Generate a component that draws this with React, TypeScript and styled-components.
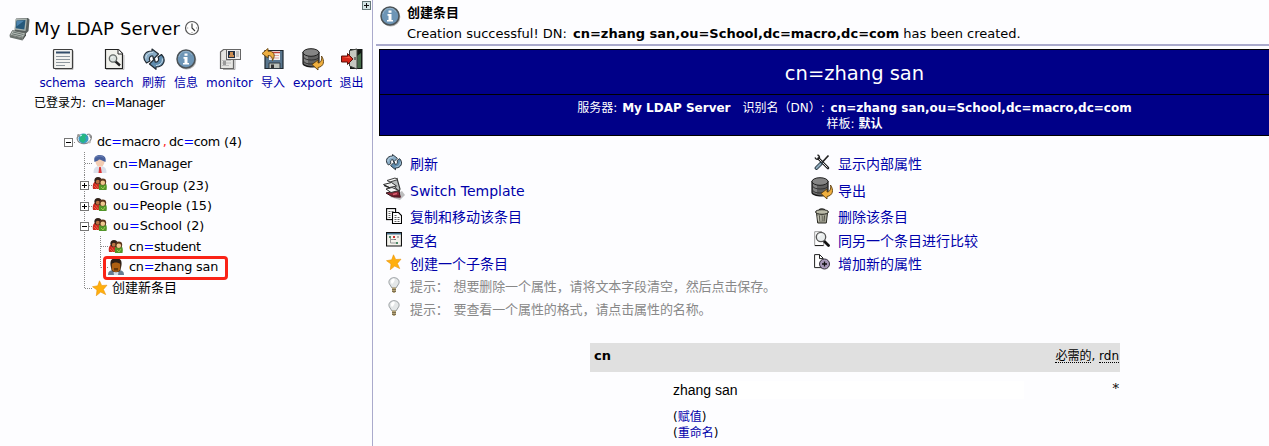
import React from 'react';
import styled, { createGlobalStyle } from 'styled-components';

const sans = `'DejaVu Sans', 'Noto Sans CJK SC', sans-serif`;

const GlobalStyle = createGlobalStyle`
  body { margin: 0; background: #fdfdff; overflow: hidden; }
  * { box-sizing: border-box; }
  svg { display: block; flex: none; }
`;

const Page = styled.div`
  display: flex;
  width: 1269px;
  height: 446px;
  overflow: hidden;
  background: #fdfdff;
  color: #000;
  font-family: ${sans};
  font-size: 13px;
  white-space: nowrap;
`;

const Sidebar = styled.aside`
  position: relative;
  flex: none;
  width: 373px;
  border-right: 1px solid #aaaacc;
`;

const ResizeButton = styled.div`
  position: absolute;
  top: 1px;
  right: 0;
`;

const ServerTitle = styled.h1`
  display: flex;
  align-items: center;
  height: 26px;
  margin: 16px 0 0 8px;
  font-size: 18px;
  font-weight: normal;
  letter-spacing: 0.2px;
  line-height: 26px;
`;

const ServerName = styled.span`
  margin: -1px 4px 0 2px;
`;

const ClockSlot = styled.span`
  margin-top: -2px;
`;

const Toolbar = styled.nav`
  display: flex;
  margin: 5px 0 0 35px;
`;

const Tool = styled.a<{ $w: number; $ls?: number }>`
  display: flex;
  flex-direction: column;
  align-items: center;
  width: ${(p) => p.$w}px;
  color: #0000aa;
  font-size: 12px;
  line-height: 18px;
  letter-spacing: ${(p) => p.$ls ?? 0}px;

  svg { margin-bottom: 3px; }
`;

const LoggedIn = styled.div`
  margin: 1px 0 0 34px;
  height: 20px;
  font-size: 12px;
  line-height: 20px;
`;

const UserName = styled.span`
  margin-left: 2px;
  letter-spacing: -0.4px;
`;

const Eq = styled.span<{ $red?: boolean }>`
  color: ${(p) => (p.$red ? '#ff2020' : '#0000ff')};
  ${(p) => (p.$red ? 'padding: 0 2.5px 0 3px;' : '')}
`;

const Tree = styled.div`
  margin: 19px 0 0 61px;
`;

const TreeRow = styled.div<{ $h: number }>`
  position: relative;
  display: flex;
  align-items: center;
  height: ${(p) => p.$h}px;
`;

const NodeIcon = styled.span<{ $gap?: number; $up?: number }>`
  margin-right: ${(p) => p.$gap ?? 5}px;
  margin-top: ${(p) => -(p.$up ?? 0)}px;
`;

const NodeText = styled.span<{ $ls?: number; $size?: number }>`
  font-size: ${(p) => p.$size ?? 12.8}px;
  line-height: 20px;
  letter-spacing: ${(p) => p.$ls ?? 0}px;
`;

const Highlight = styled.div`
  position: absolute;
  left: 42px;
  top: -1px;
  width: 125px;
  height: 24px;
  border: 3px solid #fa2317;
  border-radius: 4px;
`;

const Main = styled.main`
  flex: 1;
  min-width: 0;
  padding-left: 3px;
  overflow: hidden;
`;

const Notice = styled.section`
  display: flex;
  height: 46px;
  border-bottom: 2px solid #aaaacc;
  padding: 4px 0 0 2px;
  font-size: 13px;
  line-height: 20px;
`;

const NoticeText = styled.div`
  margin: -1px 0 0 5px;
`;

const NoticeTitle = styled.div`
  height: 21px;
  font-weight: bold;
`;

const CreatedDn = styled.b`
  margin-left: 2px;
`;

const EntryHeader = styled.header`
  width: 951px;
  margin: 3px 0 0 3px;
  border: 1px solid #000;
  background: #000088;
  color: #fff;
  text-align: center;
`;

const EntryName = styled.h2`
  height: 45px;
  margin: 0;
  border-bottom: 1px solid #000;
  font-size: 19.5px;
  font-weight: normal;
  line-height: 47px;
`;

const EntryMeta = styled.div`
  height: 40px;
  padding-top: 5px;
  font-size: 12px;
  line-height: 16px;
`;

const MetaValue = styled.b<{ $gap?: number }>`
  margin-left: ${(p) => p.$gap ?? 0}px;
`;

const Spacer = styled.span`
  display: inline-block;
  width: 12px;
`;

const Actions = styled.div`
  display: flex;
  margin: 14px 0 0 5px;
`;

const ActionColumn = styled.div<{ $w: number }>`
  width: ${(p) => p.$w}px;
`;

const Action = styled.div<{ $h: number; $hint?: boolean; $ls?: number }>`
  display: flex;
  align-items: center;
  height: ${(p) => p.$h}px;
  color: ${(p) => (p.$hint ? '#888888' : '#0000aa')};
  font-size: ${(p) => (p.$hint ? 13 : 14)}px;
  line-height: 20px;
  letter-spacing: ${(p) => p.$ls ?? 0}px;
`;

const ActionIcon = styled.span<{ $up?: number }>`
  display: flex;
  justify-content: center;
  width: 24px;
  margin-left: 1px;
  margin-right: 4px;
  margin-top: ${(p) => -(p.$up ?? 0)}px;
`;

const HintLabel = styled.span`
  width: 43.5px;
`;

const Attribute = styled.section`
  width: 530px;
  margin: 22px 0 0 214px;
`;

const AttributeHead = styled.div`
  display: flex;
  justify-content: space-between;
  height: 29px;
  padding: 3px 1px 0 4px;
  background: #e0e0e0;
  line-height: 20px;
`;

const Flags = styled.span`
  font-size: 12px;
`;

const Abbr = styled.span`
  display: inline-block;
  height: 16px;
  line-height: 18px;
  border-bottom: 1px dotted #000;
`;

const ValueRow = styled.div`
  display: flex;
  justify-content: space-between;
  padding: 9px 1px 0 83px;
`;

const ValueInput = styled.div`
  width: 351px;
  height: 18px;
  background: #fff;
  font-family: 'Liberation Sans', sans-serif;
  font-size: 14px;
  line-height: 19px;
`;

const Star = styled.span`
  font-family: 'DejaVu Serif', serif;
  font-size: 13px;
  line-height: 15px;
`;

const ValueLinks = styled.div`
  margin: 10px 0 0 83px;
  font-size: 12px;
  line-height: 16px;

  a { color: #0000aa; }
`;

const Svg = ({ s, v = s, children }: { s: number; v?: number; children: React.ReactNode }) => (
  <svg width={s} height={s} viewBox={`0 0 ${v} ${v}`} fill="none">
    {children}
  </svg>
);

const Computer = () => (
  <Svg s={24}>
    <path d="M8 1.500l12-.5 1.500 1.500-1 11.500-3 3-11-2.500z" fill="#59605f" />
    <path d="M7.500 2l11.500-.5-1.500 12.500-11-1.500z" fill="#a9b3af" />
    <path d="M8.500 3.500l9-.5-1.200 9.500-8.600-1.200z" fill="#26587a" />
    <path d="M9 4l7-.3-7.500 5.800z" fill="#4c83ad" />
    <path d="M4.500 13.500l13 2.500-2.500 5-13-3z" fill="#b9c0bb" stroke="#59605b" strokeWidth=".8" />
    <path d="M1.500 18l13.500 3.200-.5 2.300-12.500-3z" fill="#6b726e" />
    <path d="M15 21l3-5v2.500l-3.500 5z" fill="#444a47" />
    <path d="M5 15l10.500 2.500M4 16.800l10.500 2.500" stroke="#66706c" strokeWidth="1" />
  </Svg>
);

const Clock = () => (
  <Svg s={16}>
    <circle cx="8" cy="8" r="6.500" fill="#fff" stroke="#555" strokeWidth="1.200" />
    <path d="M8 3.500V8l3 3" stroke="#333" strokeWidth="1.100" />
    <path d="M3.200 8h1M12 8h1M8 12v1" stroke="#888" />
  </Svg>
);

const Schema = () => (
  <Svg s={24}>
    <path d="M4 22.500h18V4" stroke="#bbb" />
    <rect x="2.500" y="2.500" width="19" height="19" rx="1" fill="#f3f3f1" stroke="#3e3e3e" strokeWidth="1.200" />
    <path d="M5 5.500h14" stroke="#334d6a" strokeWidth="2" />
    <path d="M5 9.500h14M5 12.500h14M5 15.500h14M5 18.500h9" stroke="#8d969d" strokeWidth="1.200" />
  </Svg>
);

const Search = () => (
  <Svg s={24}>
    <path d="M4 22.500h18V8" stroke="#bbb" />
    <path d="M3.500 2.500h13l4 4v15h-17z" fill="#f1f1ec" stroke="#222" strokeWidth="1.200" />
    <path d="M16 2.500V7h4.500" fill="#fff" stroke="#222" />
    <path d="M13 14l5 4.500" stroke="#222" strokeWidth="2.400" />
    <circle cx="11" cy="11.500" r="3.700" fill="#dbe2df" stroke="#666b68" strokeWidth="1.300" />
    <path d="M9.500 11l1.500-1.500" stroke="#fff" />
  </Svg>
);

const Refresh = ({ s = 24 }: { s?: number }) => (
  <Svg s={s} v={24}>
    <path d="M4.500 16C-.5 11 2 4 10 4V2l6.500 5-5 5-.7-3C8 8.500 6.500 11 8 14z" fill="#88abc5" stroke="#222b33" strokeWidth="1.200" strokeLinejoin="round" />
    <path d="M19.500 7.500c5 5 2.500 12.500-5.500 12.500v2.300L7.500 17l5-5 .7 3c2.800.5 4.300-2 2.800-5z" fill="#5f8cae" stroke="#222b33" strokeWidth="1.200" strokeLinejoin="round" />
    <path d="M3.800 11.500c0-4 2.700-6 7.200-6.200M20.300 11.500c.6 4-2 6.800-6.300 7" stroke="#cfe0eb" />
  </Svg>
);

const Info = () => (
  <Svg s={24}>
    <circle cx="12.700" cy="12.900" r="9.600" fill="#b4b4b4" />
    <circle cx="12" cy="12" r="9" fill="#6d95b6" stroke="#4c5357" strokeWidth="1.500" />
    <path d="M5 10a7 7 0 0 1 13-2" stroke="#94b1c8" />
    <path d="M10.500 6.500h3v2.200h-3zM9.500 10h4v6H15v1.500H9V16h1.500v-4.300h-1z" fill="#fff" />
  </Svg>
);

const Monitor = () => (
  <Svg s={24}>
    <path d="M5 22.500h12V13" stroke="#aaa" />
    <path d="M2.500 5l3-2.500h10v19h-13z" fill="#e5e5e2" stroke="#666" strokeWidth="1.200" />
    <path d="M4 13.500h9M4 16h9M4 18.500h7" stroke="#bcbcbc" />
    <path d="M5 14h3v4H5z" fill="#999" />
    <rect x="8.500" y="2.500" width="14" height="10" fill="#eee" stroke="#666" />
    <rect x="10" y="4" width="7" height="7" fill="#243040" />
    <path d="M12 5h3v3h1v2h-5V8h1z" fill="#c98c52" />
    <path d="M18 5h3M18 7h3M18 9h3" stroke="#999" />
  </Svg>
);

const Import = () => (
  <Svg s={24}>
    <path d="M4 3.500h18v18H4z" fill="#58758d" stroke="#1e2830" strokeWidth="1.200" />
    <path d="M8 4h11v9H8z" fill="#f3f3f3" />
    <path d="M10 5.500h9" stroke="#bf3e38" strokeWidth="1.500" />
    <path d="M11 8.500h7M9 11h9" stroke="#e3a29c" />
    <path d="M8 16h11v5.500H8z" fill="#bdc2bb" stroke="#303a40" />
    <path d="M10 17.500h3V21h-3z" fill="#333" />
    <path d="M1 6.500L7 1.500v2.700c6-.2 8 3.800 4.500 9.300 0-3.500-1.500-5-4.500-5V11z" fill="#edae42" stroke="#67430b" strokeWidth=".9" />
  </Svg>
);

const Export = () => (
  <Svg s={24}>
    <path d="M2 5.500v11c0 3 15 6 16 0v-11z" fill="#606060" stroke="#171717" strokeWidth="1.200" />
    <path d="M3 7v9c1 1 2 1.500 4 2V9z" fill="#858585" />
    <ellipse cx="10" cy="5.500" rx="8" ry="3.800" fill="#858585" stroke="#202020" />
    <path d="M2.500 10c1 4 14.500 4 15.500 0M2.500 14c1 4 13.500 4 14.500 0" stroke="#303030" />
    <path d="M20.500 9c3.500 5 2.500 10.500-3.500 11.500V23l-6-5.500 6-4.500v3c3 0 4-3 3.500-7z" fill="#f0af3e" stroke="#5e3e0d" strokeWidth=".9" />
  </Svg>
);

const Exit = () => (
  <Svg s={24}>
    <path d="M10 2h12.500v20H10z" fill="#141a16" />
    <path d="M17 9l4-3v15h-4z" fill="#456b49" />
    <path d="M9.500 3.500L17 2v20l-7.500-3z" fill="#c6c8c1" stroke="#3e403d" />
    <path d="M15 10v3" stroke="#222" />
    <path d="M1.500 9h6V6.500L13 12l-5.500 5.500V15h-6z" fill="#d62518" stroke="#5b120b" />
    <path d="M2.500 10h6V9l2.500 2.500z" fill="#f5644d" />
  </Svg>
);

const Globe = () => (
  <Svg s={16}>
    <path d="M13 4c3-1 3 2 1 5-3 4-10 3-12 0C0 6 2 3 5 3" stroke="#888" strokeWidth="1.200" />
    <circle cx="7.500" cy="6.500" r="5" fill="#3a9bc3" />
    <path d="M5 3c2-2 5-1 6 1l-2 1 1 3-3 3-3-2V6z" fill="#25b781" />
    <path d="M4 4l2-1" stroke="#d8ffff" />
    <path d="M11 2.500c3-1 5 .5 3.500 3.500" stroke="#777" strokeWidth="1" />
    <circle cx="2.500" cy="3.500" r="1.400" fill="#999" />
    <circle cx="13.500" cy="10" r="1.400" fill="#bbb" />
  </Svg>
);

const Manager = () => (
  <svg width="16" height="20" viewBox="0 0 16 20">
    <path d="M1.500 19c0-5 2-7 6.500-7s6.500 2 6.500 7z" fill="#d9dfea" />
    <path d="M5.500 11h5l-2.500 5z" fill="#fff" />
    <path d="M7.200 13h1.600l1 6H6.500z" fill="#d33" />
    <ellipse cx="8" cy="7.500" rx="4.500" ry="5.200" fill="#f3cdb4" />
    <path d="M2.500 8c-1-5 1-7 5.500-7s6.500 3 5.500 7C11 7 9 5.500 7 5.500 6 7 4 7 2.500 8z" fill="#475f9b" />
    <path d="M3.500 3.500c2-2 6-2 8 0" stroke="#7387b9" fill="none" />
  </svg>
);

const People = () => (
  <Svg s={16}>
    <path d="M1 13c-1-5 1-8 4-8s5 3 4 8z" fill="#c92a20" />
    <path d="M7 14c-1-6 1-8 4-8s4.500 3 3.500 8z" fill="#529529" />
    <circle cx="6" cy="4.500" r="3.600" fill="#302019" />
    <circle cx="5.800" cy="5.700" r="2" fill="#ba7243" />
    <circle cx="10.800" cy="5.800" r="3.400" fill="#5b351c" />
    <circle cx="10.800" cy="6.800" r="2.300" fill="#efc78e" />
    <path d="M2 10l3 3M3.500 8.500l3 4" stroke="#f25c43" />
    <path d="M9 11l2 2 2-3" stroke="#9bca4f" />
  </Svg>
);

const Person = () => (
  <svg width="16" height="20" viewBox="0 0 16 20">
    <path d="M0 18c0-4 2-5 8-5s8 1 8 5z" fill="#667c91" />
    <path d="M5 12h6l-1 6H6z" fill="#d5dde3" />
    <path d="M2.500 8C2 3 4 1 8 1s6 2 5.500 7l-1 5c-1 3-8 3-9 0z" fill="#2d2018" />
    <path d="M3.800 7c2-2 6-2 8.400 0v5c-.5 4-7.900 4-8.400 0z" fill="#ae6012" />
    <path d="M6 11h4v2.500H6z" fill="#693909" />
  </svg>
);

const StarIcon = () => (
  <Svg s={16}>
    <path d="M7.500.8l2.200 4.700 5.300-.3-3.600 4.200 2.300 5.200-5-2.500-4.400 3.600.7-5.700L.5 6.700l5.200-.9z" fill="#ffaf0d" stroke="#e9930a" strokeWidth=".6" />
  </Svg>
);

const Scanner = () => (
  <Svg s={24}>
    <path d="M8 20l12-6 3 4-5 5z" fill="#888" opacity=".55" />
    <path d="M4 16l13-3 1 7-9-1z" fill="#8a2636" stroke="#33151b" />
    <path d="M9 19l9-1 1 2.500H12z" fill="#5b1a26" />
    <path d="M7 4l8-2.500L18 12l-1 3-5-6z" fill="#b9bdbc" stroke="#343636" strokeWidth="1.100" />
    <path d="M5 3.500L13 1l3 1.500-8 2.500z" fill="#f3f3f2" stroke="#444" />
    <path d="M1.500 7.500l8-2 5 3.500-7 1.500z" fill="#eeefee" stroke="#333" />
    <path d="M4 12l6-1.500 7 3-8 2z" fill="#f7f7f7" stroke="#333" />
    <path d="M2 8.500l6 2.500" stroke="#222" strokeWidth="1.300" />
    <path d="M11 17.500l4-1" stroke="#dd6374" strokeWidth="1.300" />
  </Svg>
);

const Copy = () => (
  <Svg s={16}>
    <rect x=".6" y=".6" width="9" height="11" fill="#fff" stroke="#000" strokeWidth="1.100" />
    <path d="M2.500 3.500h5M2.500 5.500h3M2.500 7.500h3M2.500 9.500h3" stroke="#666" strokeDasharray="2 1" />
    <path d="M6.500 4.500h6l3 3v8h-9z" fill="#fff" stroke="#000" strokeWidth="1.100" />
    <path d="M8.500 7.500h3M8.500 9.500h5M8.500 11.500h5M8.500 13.500h5" stroke="#666" strokeDasharray="2 1" />
  </Svg>
);

const Rename = () => (
  <Svg s={16}>
    <path d="M.5 1.500h15v13.500H.5z" fill="#f4f3ed" stroke="#111" strokeWidth="1.200" />
    <path d="M1 2h14v1.500H1z" fill="#426e8b" />
    <path d="M4.500 6v6h6M4.500 8.500h4" stroke="#999" />
    <path d="M3 5h2v2H3zM10 11h2v2h-2z" fill="#4f8b68" />
    <path d="M7 5h2v2H7z" fill="#cb3030" />
    <path d="M11 5.500h2v1h-2zM8 8h2v1H8z" fill="#777" />
  </Svg>
);

const Bulb = () => (
  <Svg s={16}>
    <path d="M8 .7c4.500 0 6.500 4.200 4 7.200L10 11H6L4 7.900C1.500 4.900 3.500.7 8 .7z" fill="#e4e7e8" stroke="#8d9396" strokeWidth=".9" />
    <path d="M5 4c.7-2 2-2.500 3-2.500s1 2-.5 4S5 7 5 4z" fill="#fff" />
    <path d="M6 10.500h4v4L8.500 16h-1L6 14.500z" fill="#b4a276" />
    <path d="M6 12.500h4M6 14.500h4" stroke="#6d6246" strokeWidth=".8" />
  </Svg>
);

const Tools = () => (
  <Svg s={16}>
    <path d="M4.500 4.500l9.500 9.500" stroke="#222" strokeWidth="2.600" strokeLinecap="round" />
    <path d="M5 5l8.500 8.500" stroke="#e5e5e5" strokeWidth="1" />
    <path d="M1 3.500c1 2.500 3 2 4 1.200S5.500 1.500 3.500 1" stroke="#222" strokeWidth="1.400" />
    <path d="M14.500 1.500L8 8.500" stroke="#222" strokeWidth="1.700" />
    <path d="M7 9.500l-4.500 4.500" stroke="#26343e" strokeWidth="3.800" strokeLinecap="round" />
    <path d="M6.500 10l-4 4" stroke="#8daabd" strokeWidth="1.900" strokeLinecap="round" />
  </Svg>
);

const Trash = () => (
  <Svg s={16}>
    <path d="M2.500 5h11l-1.200 10H3.700z" fill="#a7a797" stroke="#292922" />
    <ellipse cx="8" cy="4" rx="6.500" ry="2.300" fill="#bbbba9" stroke="#20201c" />
    <path d="M5.500 2c0-1.600 5-1.600 5 0" stroke="#20201c" strokeWidth="1.100" />
    <path d="M5.500 7.500l.5 6M8 7.500v6M10.500 7.500l-.5 6" stroke="#4b4b41" />
    <path d="M4 8l.5 5M7 8v5" stroke="#deded0" strokeWidth=".7" />
  </Svg>
);

const Compare = () => (
  <Svg s={16}>
    <path d="M.7.7h7l2 2v12h-9z" fill="#fff" stroke="#999" />
    <path d="M1 14.500h8.500" stroke="#222" />
    <path d="M10 10l4.500 4.500" stroke="#111" strokeWidth="2.800" strokeLinecap="round" />
    <circle cx="7" cy="6" r="4.700" fill="#e9eded" stroke="#555" strokeWidth="1.300" />
    <path d="M4.500 5.500c.5-1.500 1.500-2 3-2" stroke="#fff" strokeWidth="1.200" />
  </Svg>
);

const AddAttr = () => (
  <Svg s={16}>
    <path d="M.6.600h5l3.500 3.500v9.500H.6z" fill="#fff" stroke="#222" />
    <path d="M5.500.600v4H9" stroke="#222" />
    <circle cx="10.500" cy="10" r="5" fill="#a798b8" stroke="#35303c" />
    <path d="M10.500 7.500v5M8 10h5" stroke="#111" strokeWidth="1.300" />
  </Svg>
);

type Fold = 'open' | 'closed' | 'none';

/* Dotted connector lines and the fold box in front of a tree node. */
const Gutter = ({ h, depth, fold, last }: { h: number; depth: number; fold: Fold; last?: boolean }) => {
  const w = [15, 31, 47][depth];
  const mid = Math.floor(h / 2) + 0.5;
  const dots = { stroke: '#888', strokeDasharray: '1 1' };
  const boxX = depth === 0 ? 3.5 : 19.5;
  return (
    <svg width={w} height={h} viewBox={`0 0 ${w} ${h}`} fill="none">
      {depth > 0 && <path d={`M23.500 0V${last && depth === 1 ? mid : h}`} {...dots} />}
      {depth === 2 && <path d={`M39.500 0V${last ? mid : h}`} {...dots} />}
      <path d={`M${[11, 24, 40][depth]} ${mid}H${w}`} {...dots} />
      {fold !== 'none' && (
        <>
          <rect x={boxX} y={mid - 4} width="8" height="8" fill="#fff" stroke="#777" />
          <path d={`M${boxX + 2} ${mid}h4${fold === 'closed' ? `M${boxX + 4} ${mid - 2}v4` : ''}`} stroke="#000" strokeLinecap="square" />
        </>
      )}
    </svg>
  );
};

const tools = [
  { w: 55, icon: <Schema />, label: 'schema', ls: -0.15 },
  { w: 48, icon: <Search />, label: 'search', ls: -0.1 },
  { w: 32, icon: <Refresh />, label: '刷新' },
  { w: 32, icon: <Info />, label: '信息' },
  { w: 55, icon: <Monitor />, label: 'monitor' },
  { w: 32, icon: <Import />, label: '导入' },
  { w: 47, icon: <Export />, label: 'export' },
  { w: 31, icon: <Exit />, label: '退出' },
];

const nodes: { h: number; attr: string; value: string; fold: Fold; depth: number; icon: React.ReactNode; ls?: number; last?: boolean }[] = [
  { h: 23, attr: 'cn', value: 'Manager', fold: 'none', depth: 1, icon: <Manager />, ls: -0.3 },
  { h: 21, attr: 'ou', value: 'Group (23)', fold: 'closed', depth: 1, icon: <People /> },
  { h: 20, attr: 'ou', value: 'People (15)', fold: 'closed', depth: 1, icon: <People />, ls: -0.05 },
  { h: 20, attr: 'ou', value: 'School (2)', fold: 'open', depth: 1, icon: <People /> },
  { h: 21, attr: 'cn', value: 'student', fold: 'none', depth: 2, icon: <People />, ls: -0.3 },
  { h: 20, attr: 'cn', value: 'zhang san', fold: 'none', depth: 2, icon: <Person />, ls: -0.2, last: true },
];

const leftActions = [
  { h: 27, label: '刷新', icon: <Refresh s={18} />, up: 4 },
  { h: 27, label: 'Switch Template', icon: <Scanner />, up: 4 },
  { h: 26, label: '复制和移动该条目', icon: <Copy />, up: 3 },
  { h: 22, label: '更名', icon: <Rename />, up: 4 },
  { h: 23, label: '创建一个子条目', icon: <StarIcon />, up: 4 },
];

const hints = ['想要删除一个属性，请将文本字段清空，然后点击保存。', '要查看一个属性的格式，请点击属性的名称。'];

const rightActions = [
  { h: 27, label: '显示内部属性', icon: <Tools />, up: 4 },
  { h: 27, label: '导出', icon: <Export />, up: 5 },
  { h: 26, label: '删除该条目', icon: <Trash />, up: 3 },
  { h: 22, label: '同另一个条目进行比较', icon: <Compare />, up: 4 },
  { h: 23, label: '增加新的属性', icon: <AddAttr />, up: 4 },
];

export default function App() {
  return (
    <Page>
      <GlobalStyle />
      <Sidebar>
        <ResizeButton>
          <svg width="10" height="10" viewBox="0 0 10 10">
            <rect x=".5" y=".5" width="8" height="8" fill="#d3e4e4" stroke="#667979" />
            <path d="M2 4.500h5M4.500 2v5" stroke="#111" />
          </svg>
        </ResizeButton>
        <ServerTitle>
          <Computer />
          <ServerName>My LDAP Server</ServerName>
          <ClockSlot><Clock /></ClockSlot>
        </ServerTitle>
        <Toolbar>
          {tools.map((t) => (
            <Tool key={t.label} $w={t.w} $ls={t.ls}>
              {t.icon}
              {t.label}
            </Tool>
          ))}
        </Toolbar>
        <LoggedIn>
          已登录为: <UserName>cn<Eq>=</Eq>Manager</UserName>
        </LoggedIn>
        <Tree>
          <TreeRow $h={20}>
            <Gutter h={20} depth={0} fold="open" />
            <NodeIcon $up={4}><Globe /></NodeIcon>
            <NodeText $ls={-0.4}>
              dc<Eq>=</Eq>macro<Eq $red>,</Eq>dc<Eq>=</Eq>com
            </NodeText>
            <NodeText>&nbsp;(4)</NodeText>
          </TreeRow>
          {nodes.map((n) => (
            <TreeRow key={n.value} $h={n.h}>
              <Gutter h={n.h} depth={n.depth} fold={n.fold} last={n.last} />
              <NodeIcon $up={n.fold === 'none' ? 0 : 3}>{n.icon}</NodeIcon>
              <NodeText $ls={n.ls}>
                {n.attr}<Eq>=</Eq>{n.value}
              </NodeText>
              {n.last && <Highlight />}
            </TreeRow>
          ))}
          <TreeRow $h={22}>
            <Gutter h={22} depth={1} fold="none" last />
            <NodeIcon $up={1} $gap={4}><StarIcon /></NodeIcon>
            <NodeText $size={13}>创建新条目</NodeText>
          </TreeRow>
        </Tree>
      </Sidebar>
      <Main>
        <Notice>
          <Info />
          <NoticeText>
            <NoticeTitle>创建条目</NoticeTitle>
            Creation successful! DN: <CreatedDn>cn=zhang san,ou=School,dc=macro,dc=com</CreatedDn> has been created.
          </NoticeText>
        </Notice>
        <EntryHeader>
          <EntryName>cn=zhang san</EntryName>
          <EntryMeta>
            服务器: <MetaValue $gap={1}>My LDAP Server</MetaValue><Spacer />识别名（DN）:{' '}
            <MetaValue $gap={2}>cn=zhang san,ou=School,dc=macro,dc=com</MetaValue>
            <br />
            样板: <MetaValue>默认</MetaValue>
          </EntryMeta>
        </EntryHeader>
        <Actions>
          <ActionColumn $w={428}>
            {leftActions.map((a) => (
              <Action key={a.label} $h={a.h}>
                <ActionIcon $up={a.up}>{a.icon}</ActionIcon>
                {a.label}
              </Action>
            ))}
            {hints.map((h) => (
              <Action key={h} $h={23} $hint $ls={-0.1}>
                <ActionIcon $up={4}><Bulb /></ActionIcon>
                <HintLabel>提示：</HintLabel>
                {h}
              </Action>
            ))}
          </ActionColumn>
          <ActionColumn $w={300}>
            {rightActions.map((a) => (
              <Action key={a.label} $h={a.h}>
                <ActionIcon $up={a.up}>{a.icon}</ActionIcon>
                {a.label}
              </Action>
            ))}
          </ActionColumn>
        </Actions>
        <Attribute>
          <AttributeHead>
            <b>cn</b>
            <Flags><Abbr>必需的</Abbr>, <Abbr>rdn</Abbr></Flags>
          </AttributeHead>
          <ValueRow>
            <ValueInput>zhang san</ValueInput>
            <Star>*</Star>
          </ValueRow>
          <ValueLinks>
            (<a>赋值</a>)<br />
            (<a>重命名</a>)
          </ValueLinks>
        </Attribute>
      </Main>
    </Page>
  );
}
